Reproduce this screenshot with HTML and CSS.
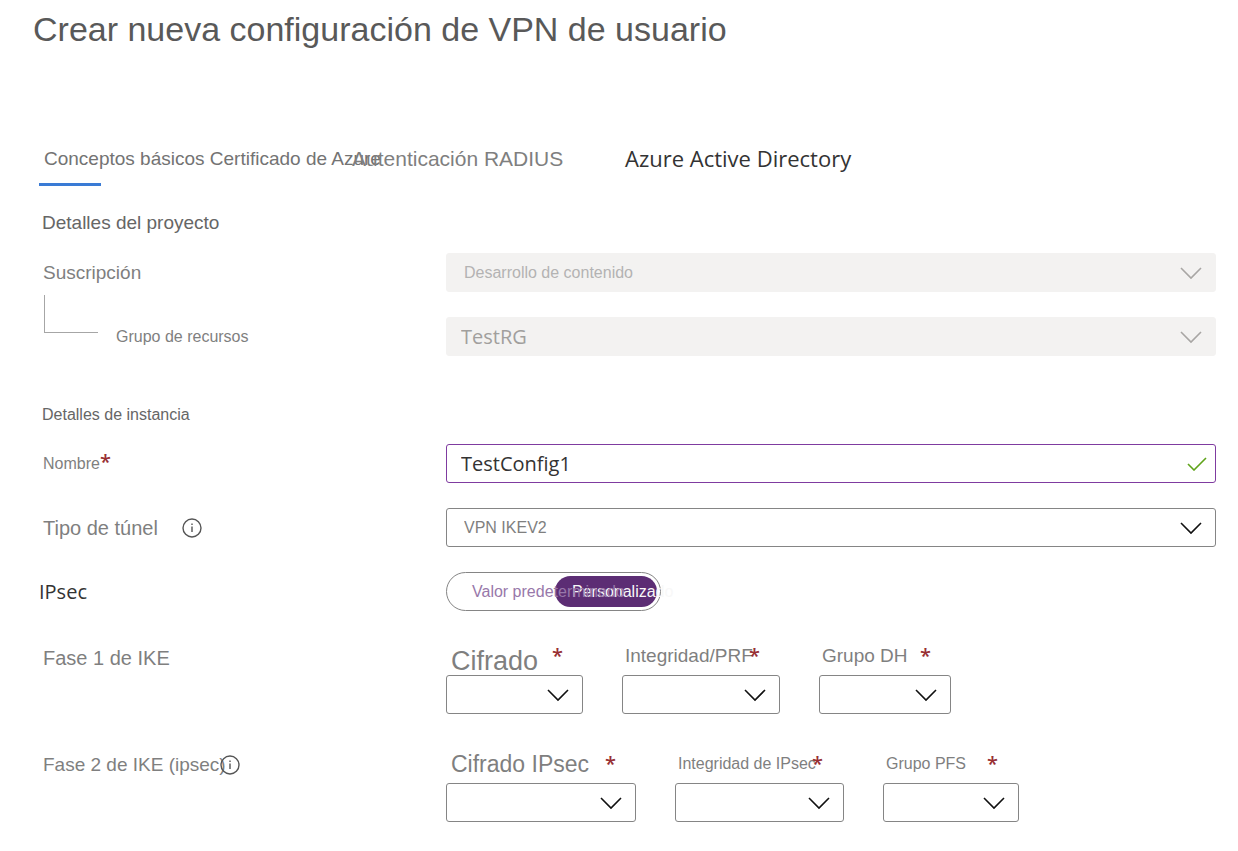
FILE: index.html
```html
<!DOCTYPE html>
<html lang="es">
<head>
<meta charset="utf-8">
<meta name="viewport" content="width=device-width, initial-scale=1">
<title>Crear nueva configuración de VPN de usuario</title>
<link rel="stylesheet" href="styles.css">
</head>
<body>
<svg class="sprite" aria-hidden="true">
  <symbol id="chevron" viewBox="0 0 22 13"><path d="M1 1.5 11 11.5 21 1.5"/></symbol>
  <symbol id="check" viewBox="0 0 20 14"><path d="M1 7 7 13 19 1"/></symbol>
  <symbol id="info" viewBox="0 0 20 20"><circle cx="10" cy="10" r="9"/><path d="M10 8.5V14M10 5.5V7"/></symbol>
</svg>
<main class="page">
  <h1 class="title">Crear nueva configuración de VPN de usuario</h1>

  <nav class="tabs">
    <button class="tab tab-active" type="button">Conceptos básicos Certificado de Azure</button>
    <button class="tab tab-radius" type="button">Autenticación RADIUS</button>
    <button class="tab tab-directory" type="button">Azure Active Directory</button>
  </nav>

  <form class="form">
    <h2 class="section section-project">Detalles del proyecto</h2>

    <div class="row">
      <label class="label text-md" for="subscription">Suscripción</label>
      <div class="control">
        <select class="field muted" id="subscription" disabled><option>Desarrollo de contenido</option></select>
        <svg class="chevron disabled"><use href="#chevron"/></svg>
      </div>
    </div>
    <div class="row">
      <div class="nested">
        <span class="branch"></span>
        <label class="label text-sm" for="group">Grupo de recursos</label>
      </div>
      <div class="control">
        <select class="field ui muted" id="group" disabled><option>TestRG</option></select>
        <svg class="chevron disabled"><use href="#chevron"/></svg>
      </div>
    </div>

    <h2 class="section section-instance">Detalles de instancia</h2>

    <div class="row">
      <label class="label text-sm" for="name">Nombre<span class="required">*</span></label>
      <div class="control">
        <input class="field ui valid" id="name" type="text" value="TestConfig1" spellcheck="false">
        <svg class="check"><use href="#check"/></svg>
      </div>
    </div>
    <div class="row">
      <div class="with-info tunnel">
        <label class="label text-lg" for="tunnel">Tipo de túnel</label>
        <svg class="info"><use href="#info"/></svg>
      </div>
      <div class="control">
        <select class="field" id="tunnel"><option>VPN IKEV2</option></select>
        <svg class="chevron"><use href="#chevron"/></svg>
      </div>
    </div>
    <div class="row">
      <span class="label ui-label" id="ipsec">IPsec</span>
      <div class="toggle" role="radiogroup" aria-labelledby="ipsec">
        <input class="radio" type="radio" name="ipsec" id="default">
        <label class="option option-default" for="default">Valor predeterminado</label>
        <input class="radio" type="radio" name="ipsec" id="custom" checked>
        <label class="option option-custom" for="custom">Personalizado</label>
      </div>
    </div>

    <div class="row phase">
      <span class="label text-lg">Fase 1 de IKE</span>
      <div class="fields">
        <div class="item w-137">
          <label class="caption text-xxl gap-106" for="enc1"><span class="name">Cifrado</span><span class="required">*</span></label>
          <div class="control"><select class="field" id="enc1"><option></option></select><svg class="chevron"><use href="#chevron"/></svg></div>
        </div>
        <div class="item w-158">
          <label class="caption text-md near gap-126" for="int1"><span class="name">Integridad/PRF</span><span class="required">*</span></label>
          <div class="control"><select class="field" id="int1"><option></option></select><svg class="chevron"><use href="#chevron"/></svg></div>
        </div>
        <div class="item w-132">
          <label class="caption text-md near gap-101" for="dh"><span class="name">Grupo DH</span><span class="required">*</span></label>
          <div class="control"><select class="field" id="dh"><option></option></select><svg class="chevron"><use href="#chevron"/></svg></div>
        </div>
      </div>
    </div>

    <div class="row phase phase-two">
      <div class="with-info ike">
        <span class="label text-md">Fase 2 de IKE (ipsec)</span>
        <svg class="info"><use href="#info"/></svg>
      </div>
      <div class="fields">
        <div class="item w-190">
          <label class="caption text-xl gap-159" for="enc2"><span class="name">Cifrado IPsec</span><span class="required">*</span></label>
          <div class="control"><select class="field" id="enc2"><option></option></select><svg class="chevron"><use href="#chevron"/></svg></div>
        </div>
        <div class="item w-169">
          <label class="caption text-sm near gap-136" for="int2"><span class="name">Integridad de IPsec</span><span class="required">*</span></label>
          <div class="control"><select class="field" id="int2"><option></option></select><svg class="chevron"><use href="#chevron"/></svg></div>
        </div>
        <div class="item w-136">
          <label class="caption text-sm near gap-104" for="pfs"><span class="name">Grupo PFS</span><span class="required">*</span></label>
          <div class="control"><select class="field" id="pfs"><option></option></select><svg class="chevron"><use href="#chevron"/></svg></div>
        </div>
      </div>
    </div>
  </form>
</main>
</body>
</html>
```
FILE: styles.css
```css
* { box-sizing: border-box; }

body {
  margin: 0;
  background: #fff;
  color: #7f7f7f;
  font-family: "Liberation Sans", Arial, sans-serif;
  font-size: 16px;
}

.sprite { display: none; }

svg {
  fill: none;
  stroke: #111;
  stroke-width: 1.6;
}

.page { padding: 8px 22px 24px 39px; }

.title {
  margin: 0 0 97px -6px;
  color: #595959;
  font-size: 34px;
  font-weight: 400;
  line-height: 42px;
}

/* Tabs */
.tabs {
  display: grid;
  grid-template-columns: 313px 273px auto;
  justify-content: start;
}

.tab {
  position: relative;
  height: 39px;
  padding: 0 0 15px;
  border: 0;
  background: none;
  color: #7f7f7f;
  font: 21px/24px "Liberation Sans", Arial, sans-serif;
  text-align: left;
  white-space: nowrap;
}

.tab-active {
  padding-left: 5px;
  color: #737373;
  font-size: 19px;
}

.tab-active::after {
  content: "";
  position: absolute;
  left: 0;
  bottom: 0;
  width: 62px;
  height: 3px;
  background: #3a7bd5;
}

.tab-directory {
  padding-bottom: 17px;
  color: #333;
  font-family: "Open Sans", sans-serif;
  font-size: 22px;
  line-height: 22px;
}

/* Form rows */
.form {
  display: flex;
  flex-direction: column;
  gap: 25px;
}

.section {
  margin: 0;
  padding-left: 3px;
  color: #666;
  font-weight: 400;
  line-height: 24px;
}

.section-project {
  margin: 25px 0 -7px;
  font-size: 19px;
}

.section-instance {
  margin: 22px 0 -8px;
  font-size: 16px;
}

.row {
  display: grid;
  grid-template-columns: 407px minmax(0, 1fr);
  align-items: center;
}

.label {
  padding-left: 4px;
  line-height: 24px;
  white-space: nowrap;
}

.text-sm { font-size: 16px; }
.text-md { font-size: 19px; }
.text-lg { font-size: 20px; }
.text-xl { font-size: 23px; }
.text-xxl { font-size: 27px; }

.ui-label {
  padding-left: 0;
  color: #333;
  font-family: "Open Sans", sans-serif;
  font-size: 20px;
}

.required {
  color: #982f33;
  font: 600 20px/20px "Open Sans", sans-serif;
}

.nested {
  display: flex;
  align-items: center;
  gap: 14px;
  padding-left: 5px;
}

.branch {
  width: 54px;
  height: 38px;
  margin-top: -46px;
  border: solid #a6a6a6;
  border-width: 0 0 1px 1px;
}

.with-info {
  display: grid;
  align-items: center;
}

.tunnel { grid-template-columns: 143px 20px; }
.ike { grid-template-columns: 181px 20px; }

.info {
  width: 20px;
  height: 20px;
  stroke: #555;
  stroke-width: 1.4;
}

/* Fields */
.control {
  position: relative;
  min-width: 0;
}

.field {
  display: block;
  width: 100%;
  height: 39px;
  padding: 0 48px 0 17px;
  border: 1px solid #858585;
  border-radius: 3px;
  outline: 0;
  appearance: none;
  background: #fff;
  color: #7f7f7f;
  font: 16px "Liberation Sans", Arial, sans-serif;
  opacity: 1;
}

.muted {
  border-color: #f3f2f1;
  background: #f3f2f1;
  color: #b3b3b3;
}

.ui {
  padding-left: 14px;
  font-family: "Open Sans", sans-serif;
  font-size: 20px;
}

.ui.muted { color: #a19f9d; }

.valid {
  border-color: #7f3ba0;
  color: #333;
}

.chevron,
.check {
  position: absolute;
  top: 50%;
  width: 22px;
  height: 13px;
  transform: translateY(-50%);
  pointer-events: none;
}

.chevron { right: 14px; }
.chevron.disabled { stroke: #a8a6a4; }

.check {
  right: 9px;
  width: 20px;
  height: 14px;
  stroke: #5fa31a;
}

/* IPsec switch */
.toggle {
  display: flex;
  width: 215px;
  height: 39px;
  padding: 3px;
  border: 1px solid #858585;
  border-radius: 20px;
}

.radio {
  position: absolute;
  opacity: 0;
}

.option {
  height: 31px;
  line-height: 31px;
  white-space: nowrap;
}

.option-default {
  z-index: 1;
  width: 105px;
  padding-left: 22px;
  color: #9878aa;
}

.option-custom {
  z-index: 1;
  flex: 1;
  min-width: 0;
  padding-left: 17px;
  border-radius: 16px;
  background: #5c2d74;
  color: #f8f8f8;
}

.option-default { z-index: 2; }

/* IKE phases */
.phase { align-items: start; }
.phase > .label { margin-top: 10px; }
.phase > .ike { margin-top: 9px; }
.phase-two { margin-top: 5px; }

.fields {
  display: flex;
  flex-wrap: wrap;
  gap: 39px;
}

.caption {
  display: grid;
  align-items: center;
  height: 39px;
  padding-left: 5px;
  line-height: 28px;
  white-space: nowrap;
}

.caption.text-xxl .name { padding-top: 10px; }

.near { padding-left: 3px; }

.w-137 { width: 137px; }
.w-158 { width: 158px; }
.w-132 { width: 132px; }
.w-190 { width: 190px; }
.w-169 { width: 169px; }
.w-136 { width: 136px; }

.gap-106 { grid-template-columns: 101px auto; }
.gap-126 { grid-template-columns: 124px auto; }
.gap-101 { grid-template-columns: 98px auto; }
.gap-159 { grid-template-columns: 154px auto; }
.gap-136 { grid-template-columns: 134px auto; }
.gap-104 { grid-template-columns: 101px auto; }
```
